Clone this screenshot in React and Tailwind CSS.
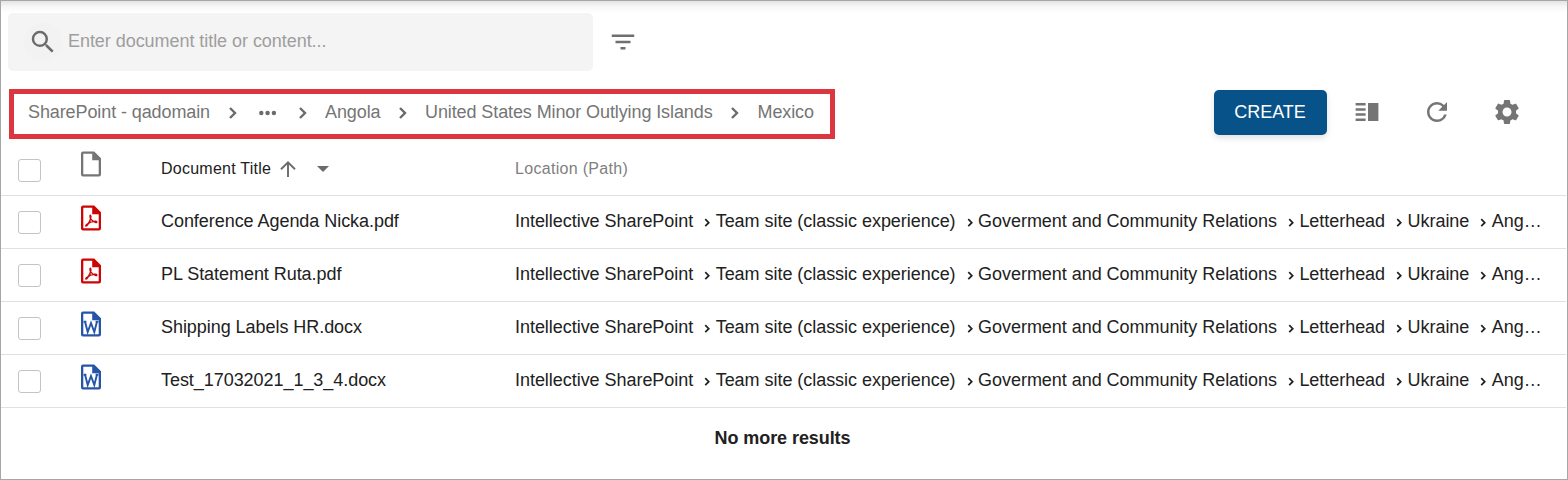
import React from "react";

const rows = [
  { title: "Conference Agenda Nicka.pdf", type: "pdf" },
  { title: "PL Statement Ruta.pdf", type: "pdf" },
  { title: "Shipping Labels HR.docx", type: "doc" },
  { title: "Test_17032021_1_3_4.docx", type: "doc" },
];

const path = [
  "Intellective SharePoint",
  "Team site (classic experience)",
  "Goverment and Community Relations",
  "Letterhead",
  "Ukraine",
  "Ang…",
];

function Icon({ d, className }) {
  return (
    <svg viewBox="0 0 24 24" fill="currentColor" className={className}>
      <path d={d} />
    </svg>
  );
}

function FileIcon({ type, className }) {
  return (
    <svg viewBox="0 0 20 26" className={className}>
      <path
        fill="currentColor"
        fillRule="evenodd"
        d="M2 .4H13.2L20 7.2V23.6a2 2 0 0 1-2 2H2a2 2 0 0 1-2-2V2.4a2 2 0 0 1 2-2ZM2.3 2.8V23.2H17.7V9.2H11.2V2.8Z"
      />
      {type === "pdf" && (
        <path
          fill="none"
          stroke="currentColor"
          strokeWidth="1.4"
          strokeLinecap="round"
          strokeLinejoin="round"
          d="M9 10.8C8.6 13 11 16.6 15 17.6C16.4 17.6 16 16.2 14.4 16.2C11.2 16.2 7.6 17.8 5.4 19.8C4 21.4 5.2 21.6 6.4 20C8.2 17.4 9.8 14.2 9.9 11.6C9.9 10.2 9.2 10 9 10.8Z"
        />
      )}
      {type === "doc" && (
        <path
          fill="none"
          stroke="currentColor"
          strokeWidth="1.9"
          strokeLinejoin="miter"
          d="M2.6 10.7H5.4M4 10.4L6.7 21L10 12L13.3 21L16 10.4M14.6 10.7H17.4"
        />
      )}
    </svg>
  );
}

function Checkbox({ className }) {
  return (
    <span className={`block h-[23px] w-[23px] shrink-0 rounded-[3px] border border-[#c4c4c4] bg-white ${className}`} />
  );
}

function Crumb({ children }) {
  return <span className="whitespace-nowrap">{children}</span>;
}

function CrumbChevron({ className }) {
  return (
    <svg viewBox="0 0 8 12" className={`mt-px h-3 w-2 shrink-0 ${className}`}>
      <path d="M1 1L6 6L1 11" fill="none" stroke="#6b6b6b" strokeWidth="2.4" />
    </svg>
  );
}

function PathChevron() {
  return (
    <svg viewBox="0 0 22 10" className="mt-[3px] h-2.5 w-[22.5px] shrink-0">
      <path d="M12 1.2L15.5 4.7L12 8.2" fill="none" stroke="#212121" strokeWidth="1.7" />
    </svg>
  );
}

export default function App() {
  return (
    <div className="h-[480px] w-[1568px] overflow-hidden border border-[#a6a6a6] bg-white font-['Liberation_Sans',Arial,sans-serif] text-lg text-[#212121]">
      <div className="h-3 bg-linear-to-b from-[#e4e4e4] via-[#f8f8f8] to-white" />

      <div className="flex h-[58px] items-center pl-[7px]">
        <div className="flex h-[58px] w-[585px] items-center rounded-[5px] bg-[#f4f4f4] pl-4">
          <span className="flex h-[38px] w-[38px] items-center justify-center rounded-full bg-[#f2f2f2]">
            <Icon
              className="h-[30px] w-[30px] text-[#6b6b6b]"
              d="M15.5 14h-.79l-.28-.27A6.471 6.471 0 0 0 16 9.5 6.5 6.5 0 1 0 9.5 16c1.61 0 3.09-.59 4.23-1.57l.27.28v.79l5 4.99L20.49 19l-4.99-5zm-6 0C7.01 14 5 11.99 5 9.5S7.01 5 9.5 5 14 7.01 14 9.5 11.99 14 9.5 14z"
            />
          </span>
          <span className="ml-1.5 -mt-0.5 tracking-[-0.05px] text-[#9e9e9e]">Enter document title or content...</span>
        </div>
        <Icon className="ml-[15px] h-[30px] w-[30px] text-[#6f6f6f]" d="M10 18h4v-2h-4v2zM3 6v2h18V6H3zm3 7h12v-2H6v2z" />
      </div>

      <div className="flex h-[68px] pl-2 pt-[18px]">
        <nav className="flex h-[50px] w-[826px] items-center border-5 border-[#dc3640] pb-1 pl-[14px] tracking-[-0.1px] text-[#757575]">
          <span className="w-[200.5px] shrink-0"><Crumb>SharePoint - qadomain</Crumb></span>
          <CrumbChevron className="mr-[22px]" />
          <svg viewBox="0 0 18 6" className="mt-px h-1.5 w-[18px] shrink-0">
            <circle cx="2.3" cy="3" r="2.2" fill="#6b6b6b" />
            <circle cx="8.6" cy="3" r="2.2" fill="#6b6b6b" />
            <circle cx="14.9" cy="3" r="2.2" fill="#6b6b6b" />
          </svg>
          <CrumbChevron className="ml-[22.5px] mr-[18px]" />
          <span className="w-[74px] shrink-0"><Crumb>Angola</Crumb></span>
          <CrumbChevron className="mr-[18px]" />
          <span className="w-[306px] shrink-0"><Crumb>United States Minor Outlying Islands</Crumb></span>
          <CrumbChevron className="mr-[18.5px]" />
          <Crumb>Mexico</Crumb>
        </nav>
        <div className="ml-[379px] mt-px flex h-[45px] items-center">
          <button className="h-[45px] w-[113px] rounded-[5px] bg-[#08528a] pb-0.5 pr-px text-white shadow-[0_3px_6px_rgba(0,0,0,0.12)]">
            CREATE
          </button>
          <svg viewBox="0 0 24 18" className="-mt-px ml-7 h-[18px] w-6 text-[#757575]" fill="currentColor">
            <path d="M.6 0H10.6V2.5H.6zM.6 5.2H10.6V7.7H.6zM.6 10.3H10.6V12.8H.6zM.6 15.5H10.6V18H.6zM13 0H23.4V18H13z" />
          </svg>
          <Icon
            className="-mt-0.5 ml-[43px] h-[30px] w-[30px] text-[#757575]"
            d="M17.65 6.35A7.958 7.958 0 0 0 12 4c-4.42 0-7.99 3.58-7.99 8s3.57 8 7.99 8c3.73 0 6.84-2.55 7.73-6h-2.08A5.99 5.99 0 0 1 12 18c-3.31 0-6-2.69-6-6s2.69-6 6-6c1.66 0 3.14.69 4.22 1.78L13 11h7V4l-2.35 2.35z"
          />
          <Icon
            className="-mt-0.5 ml-10 h-[30px] w-[30px] text-[#757575]"
            d="M19.14 12.94c.04-.3.06-.61.06-.94 0-.32-.02-.64-.07-.94l2.03-1.58a.49.49 0 0 0 .12-.61l-1.92-3.32a.488.488 0 0 0-.59-.22l-2.39.96c-.5-.38-1.03-.7-1.62-.94l-.36-2.54a.484.484 0 0 0-.48-.41h-3.84c-.24 0-.43.17-.47.41l-.36 2.54c-.59.24-1.13.57-1.62.94l-2.39-.96c-.22-.08-.47 0-.59.22L2.74 8.87c-.12.21-.08.47.12.61l2.03 1.58c-.05.3-.09.63-.09.94s.02.64.07.94l-2.03 1.58a.49.49 0 0 0-.12.61l1.92 3.32c.12.22.37.29.59.22l2.39-.96c.5.38 1.03.7 1.62.94l.36 2.54c.05.24.24.41.48.41h3.84c.24 0 .44-.17.47-.41l.36-2.54c.59-.24 1.13-.56 1.62-.94l2.39.96c.22.08.47 0 .59-.22l1.92-3.32c.12-.22.07-.47-.12-.61l-2.01-1.58zM12 15.6c-1.98 0-3.6-1.62-3.6-3.6s1.62-3.6 3.6-3.6 3.6 1.62 3.6 3.6-1.62 3.6-3.6 3.6z"
          />
        </div>
      </div>

      <div className="mr-px flex h-[57px] items-start border-b border-[#e0e0e0] pl-[17px]">
        <Checkbox className="mt-5" />
        <FileIcon className="ml-10 mt-3 h-[26px] w-5 text-[#757575]" />
        <div className="ml-[60px] mt-[18px] flex w-[354px] items-center text-base tracking-[0.25px]">
          <span>Document Title</span>
          <svg viewBox="0 0 16 16" className="-mt-px ml-[9px] h-4 w-4" fill="none" stroke="#6b6b6b" strokeWidth="1.9">
            <path d="M8 16V1.5M1 8.2L8 1.4L15 8.2" />
          </svg>
          <svg viewBox="0 0 12 6" className="ml-[21px] h-1.5 w-3" fill="#6b6b6b">
            <path d="M0 0H12L6 6z" />
          </svg>
        </div>
        <span className="mt-[18px] text-base tracking-[0.3px] text-[#808080]">Location (Path)</span>
      </div>

      {rows.map((row) => (
        <div key={row.title} className="mr-px flex h-[53px] items-start border-b border-[#e0e0e0] pl-[17px]">
          <Checkbox className="mt-[15px]" />
          <FileIcon
            type={row.type}
            className={`ml-10 mt-[9px] h-[26px] w-5 shrink-0 ${row.type === "pdf" ? "text-[#cc0505]" : "text-[#2655a8]"}`}
          />
          <span className="ml-[60px] mt-[11px] w-[354px] shrink-0 whitespace-nowrap tracking-[-0.05px]">{row.title}</span>
          <div className="mt-[11px] flex items-center whitespace-nowrap tracking-[-0.04px]">
            {path.map((part, i) => (
              <React.Fragment key={part}>
                {i > 0 && <PathChevron />}
                <span>{part}</span>
              </React.Fragment>
            ))}
          </div>
        </div>
      ))}

      <div className="mt-4 pr-[3px] text-center font-bold tracking-[-0.07px]">No more results</div>
    </div>
  );
}
